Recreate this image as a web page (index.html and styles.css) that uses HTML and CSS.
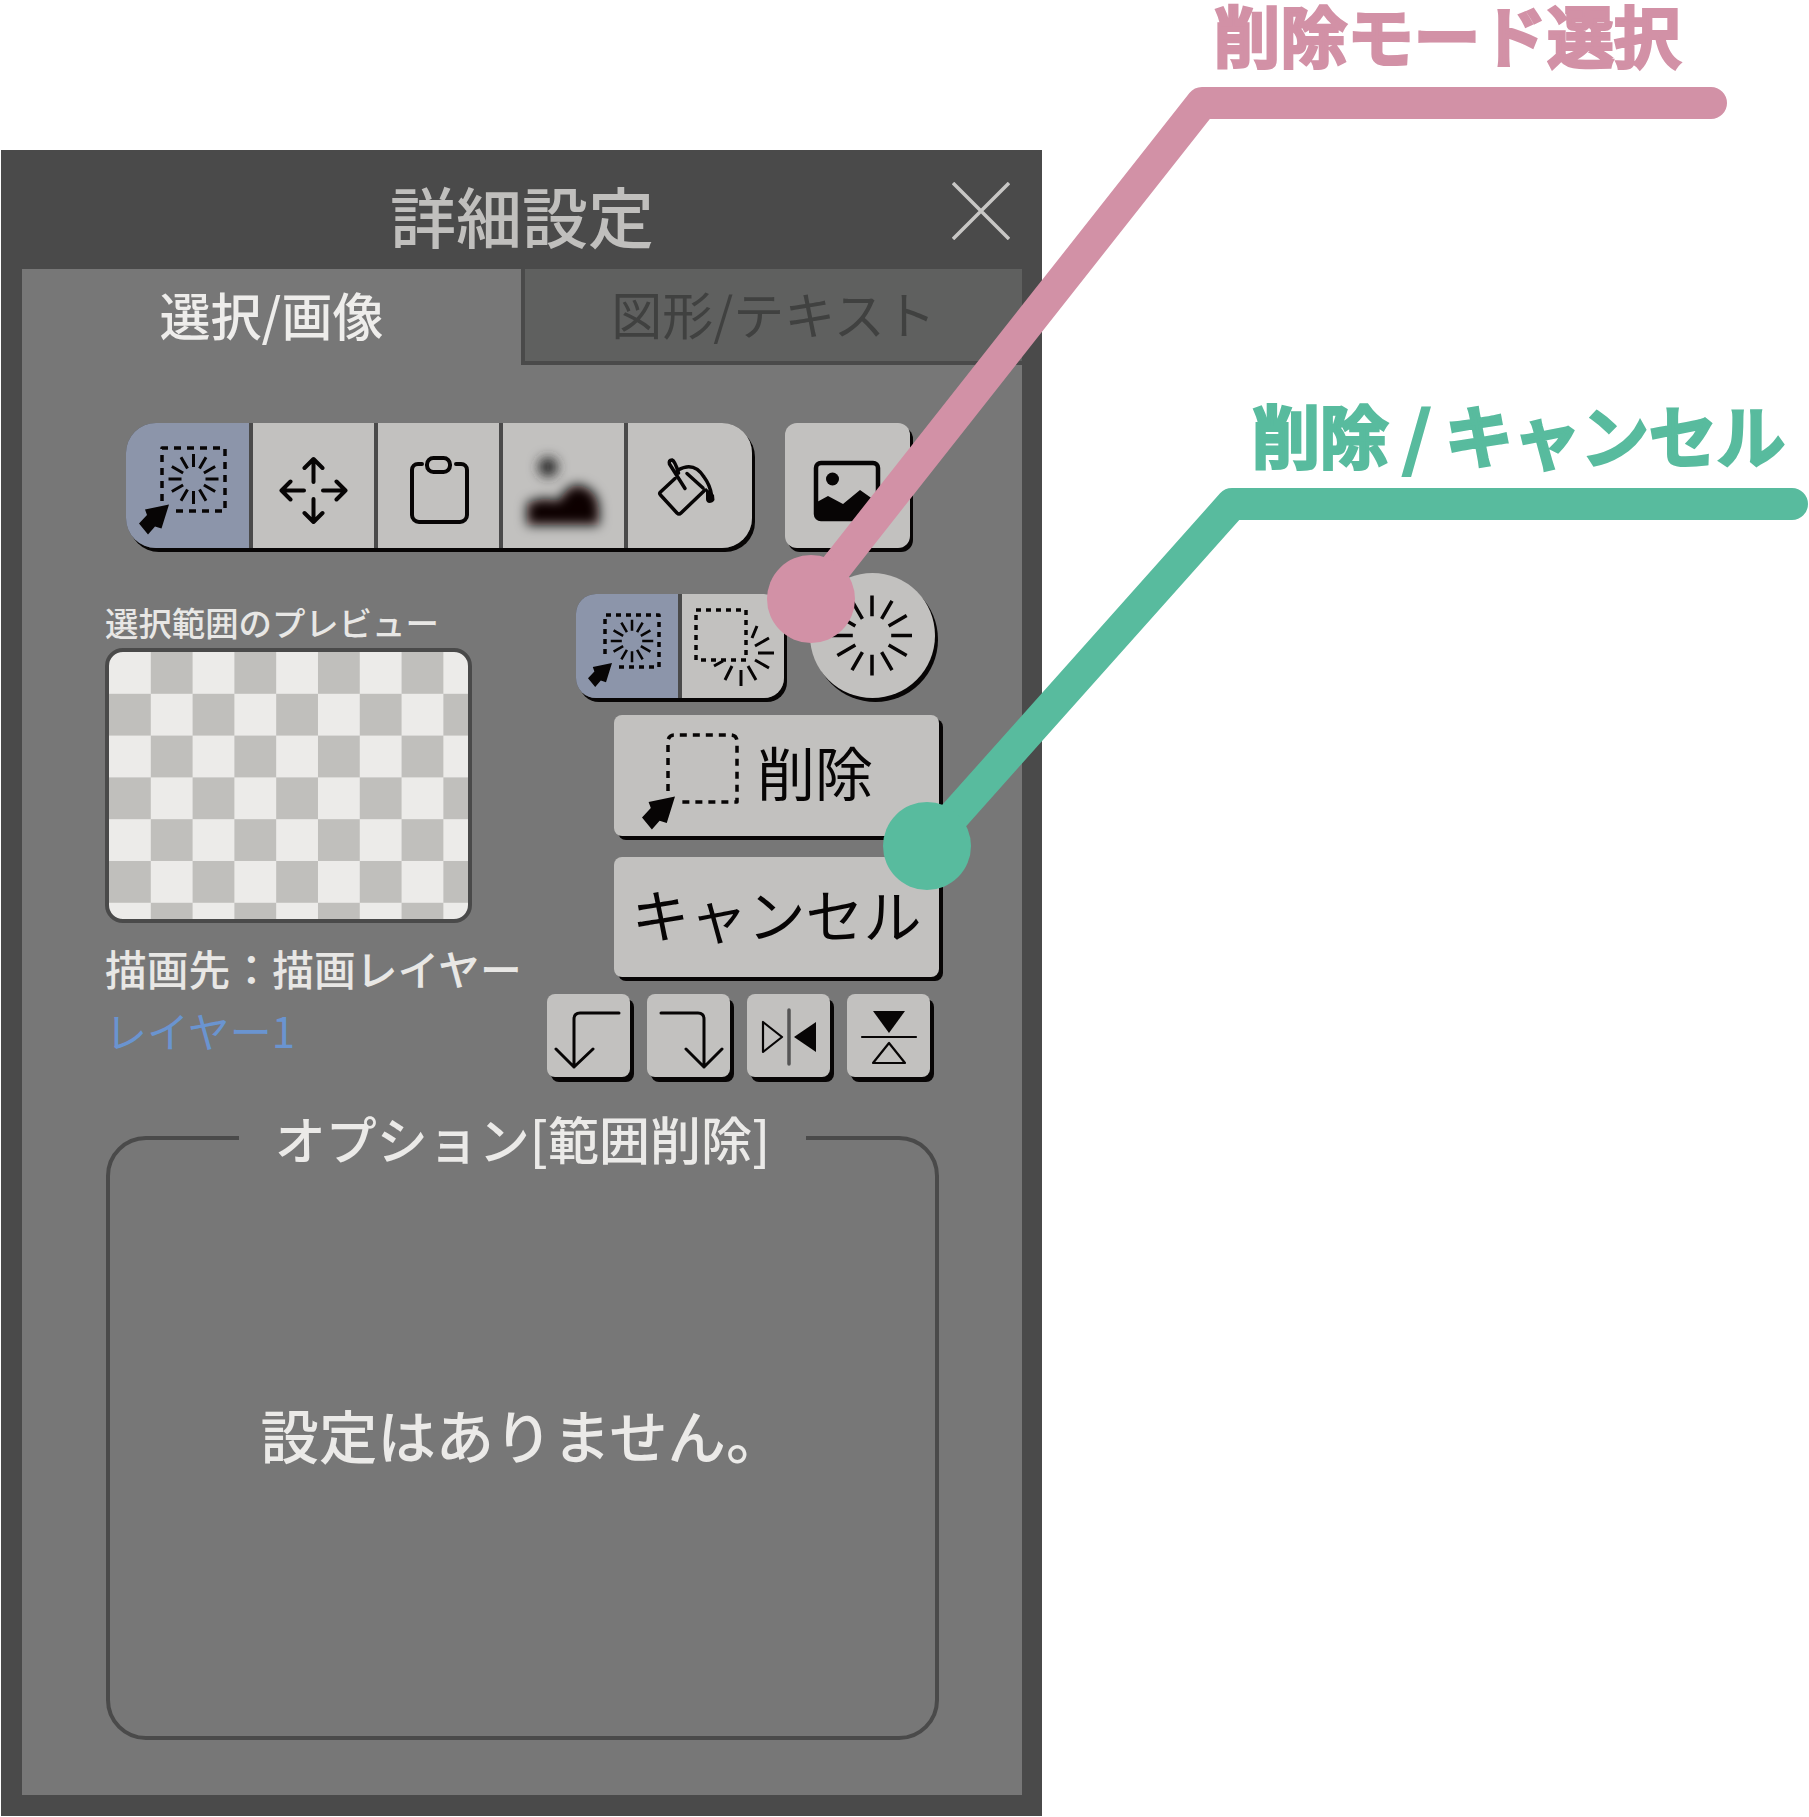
FILE: index.html
```html
<!DOCTYPE html>
<html lang="ja">
<head>
  <meta charset="UTF-8">
  <title>詳細設定</title>
  <link rel="stylesheet" href="styles.css">
</head>
<body>
  <svg class="defs" width="0" height="0">
    <defs>
      <path id="rays" d="M0-12V-25M6-10.4L12.5-21.65M10.4-6L21.65-12.5M12 0H25M10.4 6L21.65 12.5M6 10.4L12.5 21.65M0 12V25M-6 10.4L-12.5 21.65M-10.4 6L-21.65 12.5M-12 0H-25M-10.4-6L-21.65-12.5M-6-10.4L-12.5-21.65"/>
      <path id="cursor" d="M0 0L-24 5L-22 10.5L-30 19L-21 30L-14 22L-7.5 24Z"/>
      <filter id="soft" x="-30%" y="-30%" width="160%" height="160%"><feGaussianBlur stdDeviation="6"/></filter>
    </defs>
  </svg>

  <div class="panel">
    <header class="titlebar">
      <h1 class="title">詳細設定</h1>
      <svg class="close" width="58" height="58" viewBox="0 0 58 58"><path d="M1 1L57 57M57 1L1 57"/></svg>
    </header>

    <div class="content">
      <div class="tabs">
        <div class="tab tab-on">選択/画像</div>
        <div class="tab tab-off">図形/テキスト</div>
      </div>

      <div class="toolrow">
        <div class="tools">
          <div class="tool tool-first selected">
            <svg class="ico" width="123" height="125" viewBox="0 0 123 125">
              <path class="dash" d="M36 78V25H99V88H47"/>
              <use href="#rays" class="ray" transform="translate(67.5 56)"/>
              <use href="#cursor" class="solid" transform="translate(43 81.5)"/>
            </svg>
          </div>
          <div class="tool">
            <svg class="ico" width="121" height="125" viewBox="0 0 121 125">
              <path class="line" d="M60.5 59V36M51.5 45L60.5 36L69.5 45M60.5 76V99M51.5 90L60.5 99L69.5 90M51 67.5H28.5M37.5 58.5L28.5 67.5L37.5 76.5M70 67.5H92.5M83.5 58.5L92.5 67.5L83.5 76.5"/>
            </svg>
          </div>
          <div class="tool">
            <svg class="ico" width="121" height="125" viewBox="0 0 121 125">
              <path class="line" d="M44 41H40a6 6 0 0 0-6 6V92a7 7 0 0 0 7 7H82a7 7 0 0 0 7-7V47a6 6 0 0 0-6-6H78"/>
              <rect class="line" x="49" y="35" width="23" height="14" rx="6.5"/>
            </svg>
          </div>
          <div class="tool">
            <svg class="ico" width="121" height="125" viewBox="0 0 121 125">
              <g filter="url(#soft)">
                <circle class="grey" cx="45" cy="44" r="10"/>
                <path class="solid" d="M24 102V80Q42 72 55 78Q66 60 77 62Q94 66 96 84V102Z"/>
              </g>
            </svg>
          </div>
          <div class="tool tool-last">
            <svg class="ico" width="124" height="125" viewBox="0 0 124 125">
              <path class="line thin" d="M47 55.500L32.500 69q-1.500 1.500 0 3L49 90q2 2 4 0L77 67"/>
              <path class="line thin" d="M50 47Q66 38 76 54Q82 62 83.500 72"/>
              <path class="line thin" d="M59 50.500L75 65"/>
              <path class="line thin" d="M57 65.500L41.500 41q-1-4 2.500-4q3 1 6.500 13"/>
              <path class="solid" d="M78 65L86 72L86.500 77Q85 80 81 80Q78 79 78 76Z"/>
            </svg>
          </div>
        </div>
        <div class="tool-single">
          <svg class="ico" width="125" height="125" viewBox="0 0 125 125">
            <rect class="line heavy" x="31" y="40" width="62" height="56" rx="5"/>
            <circle class="solid" cx="47.5" cy="56" r="6.5"/>
            <path class="solid" d="M32 79L43 73L58 81L75 67L92 79V95H32Z"/>
          </svg>
        </div>
      </div>

      <div class="lower">
        <div class="left">
          <div class="preview-label">選択範囲のプレビュー</div>
          <div class="preview"></div>
          <div class="target">描画先：描画レイヤー</div>
          <div class="layer">レイヤー1</div>
        </div>

        <div class="right">
          <div class="moderow">
            <div class="modes">
              <div class="mode selected">
                <svg class="ico" width="102" height="104" viewBox="0 0 102 104">
                  <path class="dash small" d="M29 60V21H83V73H40"/>
                  <use href="#rays" class="ray" transform="translate(56 47) scale(.85)"/>
                  <use href="#cursor" class="solid" transform="translate(36 69) scale(.8)"/>
                </svg>
              </div>
              <div class="mode">
                <svg class="ico" width="102" height="104" viewBox="0 0 102 104">
                  <path class="dash small" d="M14 16H64V66H14Z"/>
                  <path class="line slim" d="M70 44L75 32M73 52L87 44M76 59H92M73 66L87 74M66 72L74 86M59 76V92M50 72L43 86M41 67L32 72"/>
                </svg>
              </div>
            </div>
            <div class="dial">
              <svg class="ico" width="125" height="125" viewBox="0 0 125 125">
                <use href="#rays" class="ray-big" transform="translate(62 62.5) scale(1.6)"/>
              </svg>
            </div>
          </div>

          <div class="action action-del">
            <svg class="ico" width="143" height="121" viewBox="0 0 143 121">
              <path class="dash" d="M54 76V26a6 6 0 0 1 6-6H117a6 6 0 0 1 6 6V87H68"/>
              <use href="#cursor" class="solid" transform="translate(61 81.500) scale(1.1)"/>
            </svg>
            <span class="action-text">削除</span>
          </div>
          <div class="action action-cancel"><span class="action-text">キャンセル</span></div>

          <div class="smallrow">
            <div class="small">
              <svg class="ico" width="83" height="83" viewBox="0 0 83 83"><path class="line mid" d="M72 19H33Q27 19 27 25V73M9 55L27 73L46 55"/></svg>
            </div>
            <div class="small">
              <svg class="ico" width="83" height="83" viewBox="0 0 83 83"><path class="line mid" d="M14 19H51Q57 19 57 25V73M39 55L57 73L75 55"/></svg>
            </div>
            <div class="small">
              <svg class="ico" width="83" height="83" viewBox="0 0 83 83">
                <path class="axis" d="M42 16V70"/>
                <path class="line hair" d="M16 28V58L35 43Z"/>
                <path class="solid" d="M69 28V58L47 43Z"/>
              </svg>
            </div>
            <div class="small">
              <svg class="ico" width="83" height="83" viewBox="0 0 83 83">
                <path class="solid" d="M26 17H58L42 39Z"/>
                <path class="line hair" d="M15 43H69"/>
                <path class="line hair" d="M42 49L26 69H58Z"/>
              </svg>
            </div>
          </div>
        </div>
      </div>

      <fieldset class="options">
        <legend>オプション[範囲削除]</legend>
        <div class="empty">設定はありません。</div>
      </fieldset>
    </div>
  </div>

  <!-- callouts drawn over the screenshot -->
  <svg class="callouts" width="1809" height="1817" viewBox="0 0 1809 1817">
    <path class="pink" d="M811 599L1202 103H1711"/>
    <circle class="pink-dot" cx="811" cy="599" r="44"/>
    <path class="green" d="M927 846L1232 504H1792"/>
    <circle class="green-dot" cx="927" cy="846" r="44"/>
  </svg>
  <div class="note note-pink">削除モード選択</div>
  <div class="note note-green">削除 / キャンセル</div>
</body>
</html>
```

FILE: styles.css
```css
* {
  box-sizing: border-box;
}
body {
  margin: 0;
  width: 1809px;
  height: 1817px;
  position: relative;
  overflow: hidden;
  background: #fff;
  font-family: "Noto Sans CJK JP", "Noto Sans", sans-serif;
}
.defs {
  display: block;
  height: 0;
}
.panel {
  margin: 150px 0 0 1px;
  width: 1041px;
  height: 1666px;
  padding: 0 20px 21px 21px;
  background: #4a4a4a;
  display: flex;
  flex-direction: column;
}
.titlebar {
  height: 119px;
  display: grid;
  grid-template-columns: 1fr auto 1fr;
  align-items: start;
}
.title {
  grid-column: 2;
  margin: 24px 0 0 0;
  font-size: 66px;
  line-height: 80px;
  font-weight: 500;
  color: #c0bfbd;
}
.close {
  grid-column: 3;
  justify-self: end;
  margin: 32px 12px 0 0;
}
.close path {
  stroke: #c8c7c5;
  stroke-width: 3.5;
  fill: none;
}
.content {
  flex: 1;
  background: #777;
}
.tabs {
  display: flex;
  height: 96px;
}
.tab {
  font-size: 51px;
  line-height: 78px;
  text-align: center;
  font-weight: 500;
}
.tab-on {
  width: 499px;
  padding-top: 6px;
  color: #eeedeb;
}
.tab-off {
  width: 501px;
  background: #5f605f;
  color: #404140;
  border-left: 4px solid #4a4a4a;
  border-bottom: 4px solid #4a4a4a;
  padding-top: 5px;
  font-weight: 400;
}

/* tool buttons */
.toolrow {
  display: flex;
  gap: 33px;
  margin: 58px 0 0 104px;
}
.tools {
  display: flex;
  gap: 4px;
  height: 125px;
  background: #4a4a4a;
  border-radius: 30px;
  overflow: hidden;
  box-shadow: 3px 4px 0 #070505;
}
.tool {
  width: 121px;
  background: #c2c1bf;
}
.tool-first {
  width: 123px;
}
.tool-last {
  width: 124px;
}
.selected {
  background: #8c95aa;
}
.tool-single {
  width: 125px;
  height: 125px;
  background: #c2c1bf;
  border-radius: 12px;
  box-shadow: 3px 4px 0 #070505;
}
.ico {
  display: block;
}
.line, .dash, .axis, .ray, .ray-big {
  fill: none;
  stroke: #070505;
  stroke-width: 4;
  stroke-linecap: round;
  stroke-linejoin: round;
}
.line.thin {
  stroke-width: 3.5;
}
.line.slim {
  stroke-width: 3;
  stroke-linecap: butt;
}
.line.heavy {
  stroke-width: 4.5;
}
.line.mid {
  stroke-width: 3;
}
.line.hair {
  stroke-width: 2.2;
}
.ray {
  stroke-width: 3;
  stroke-linecap: butt;
}
.ray-big {
  stroke-width: 2.2;
  stroke-linecap: butt;
}
.dash {
  stroke-width: 3.5;
  stroke-dasharray: 7 6;
  stroke-linecap: butt;
}
.dash.small {
  stroke-dasharray: 5 5;
}
.axis {
  stroke: #555;
  stroke-width: 3.5;
}
.solid {
  fill: #070505;
}
.grey {
  fill: #2a2a2a;
}

/* lower part */
.lower {
  display: flex;
  margin: 25px 0 0 83px;
}
.left {
  width: 442px;
}
.preview-label {
  margin-top: 29px;
  height: 46px;
  font-size: 33.4px;
  line-height: 40px;
  font-weight: 500;
  color: #e8e7e5;
  white-space: nowrap;
}
.preview {
  width: 367px;
  height: 275px;
  border: 4px solid #4a4a4a;
  border-radius: 18px;
  background: conic-gradient(#c0bfbc 25%, #ecebe9 0 50%, #c0bfbc 0 75%, #ecebe9 0) 0 0 / 83.6px 83.6px;
  background-origin: padding-box;
}
.target {
  margin-top: 20px;
  font-size: 41.8px;
  line-height: 50px;
  font-weight: 500;
  color: #e8e7e5;
  white-space: nowrap;
}
.layer {
  margin-top: 15px;
  font-size: 42px;
  line-height: 44px;
  color: #6a94d0;
}
.moderow {
  display: flex;
  align-items: flex-start;
  gap: 26px;
  margin-left: 29px;
}
.modes {
  margin-top: 21px;
  display: flex;
  gap: 4px;
  height: 104px;
  background: #4a4a4a;
  border-radius: 20px;
  overflow: hidden;
  box-shadow: 3px 4px 0 #070505;
}
.mode {
  width: 102px;
  background: #c2c1bf;
}
.mode.selected {
  background: #8c95aa;
}
.dial {
  width: 125px;
  height: 125px;
  border-radius: 50%;
  background: #c2c1bf;
  box-shadow: 3px 4px 0 #070505;
}
.action {
  width: 325px;
  margin-left: 67px;
  background: #c2c1bf;
  border-radius: 8px;
  box-shadow: 4px 4px 0 #070505;
  color: #070505;
  display: flex;
  align-items: center;
}
.action-text {
  padding-bottom: 9px;
}
.action-del {
  height: 121px;
  margin-top: 17px;
  font-size: 58px;
}
.action-cancel {
  height: 120px;
  margin-top: 21px;
  font-size: 58px;
  justify-content: center;
  white-space: nowrap;
}
.smallrow {
  display: flex;
  gap: 17px;
  margin-top: 17px;
}
.small {
  width: 83px;
  height: 83px;
  background: #c2c1bf;
  border-radius: 8px;
  box-shadow: 4px 5px 0 #070505;
}

/* options box */
.options {
  display: flex;
  align-items: center;
  justify-content: center;
  width: 833px;
  height: 632px;
  margin: 31px 0 0 84px;
  padding: 0 0 36px 0;
  min-width: 0;
  border: 4px solid #4a4a4a;
  border-radius: 40px;
}
.options legend {
  margin: 0 auto;
  padding: 0 36px;
  font-size: 51px;
  line-height: 60px;
  font-weight: 500;
  color: #ebeae8;
  white-space: nowrap;
}
.empty {
  font-size: 58.4px;
  line-height: 70px;
  font-weight: 500;
  color: #ebeae8;
}

/* callouts */
.callouts {
  position: absolute;
  left: 0;
  top: 0;
}
.pink, .green {
  fill: none;
  stroke-width: 32;
  stroke-linecap: round;
  stroke-linejoin: round;
}
.pink {
  stroke: #d291a6;
}
.green {
  stroke: #58bb9e;
}
.pink-dot {
  fill: #d291a6;
}
.green-dot {
  fill: #58bb9e;
}
.note {
  position: absolute;
  font-weight: 500;
  white-space: nowrap;
}
.note-pink {
  left: 1214px;
  top: -2px;
  font-size: 66px;
  line-height: 70px;
  letter-spacing: 0.7px;
  color: #d291a6;
  -webkit-text-stroke: 4px #d291a6;
}
.note-green {
  left: 1252px;
  top: 396px;
  font-size: 68px;
  line-height: 76px;
  color: #58bb9e;
  -webkit-text-stroke: 4px #58bb9e;
}
```
